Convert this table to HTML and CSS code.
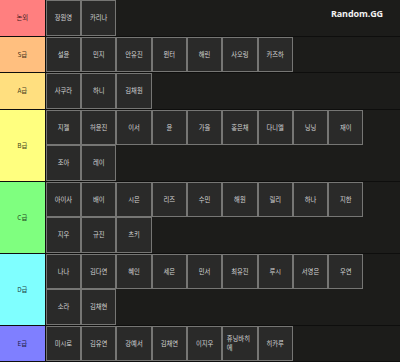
FILE: index.html
```html
<!DOCTYPE html>
<html lang="ko">
<head>
<meta charset="utf-8">
<title>Tier list</title>
<link rel="stylesheet" href="styles.css">
</head>
<body>
<div class="tierlist">
  <div class="row">
    <div class="label t0">논외</div>
    <div class="items">
      <div class="item"><span>장원영</span></div>
      <div class="item"><span>카리나</span></div>
    </div>
  </div>
  <div class="row">
    <div class="label ts">S급</div>
    <div class="items">
      <div class="item"><span>설윤</span></div>
      <div class="item"><span>민지</span></div>
      <div class="item"><span>안유진</span></div>
      <div class="item"><span>윈터</span></div>
      <div class="item"><span>해린</span></div>
      <div class="item"><span>사오링</span></div>
      <div class="item"><span>카즈하</span></div>
    </div>
  </div>
  <div class="row">
    <div class="label ta">A급</div>
    <div class="items">
      <div class="item"><span>사쿠라</span></div>
      <div class="item"><span>하니</span></div>
      <div class="item"><span>김채원</span></div>
    </div>
  </div>
  <div class="row">
    <div class="label tb">B급</div>
    <div class="items">
      <div class="item"><span>지젤</span></div>
      <div class="item"><span>허윤진</span></div>
      <div class="item"><span>이서</span></div>
      <div class="item"><span>윤</span></div>
      <div class="item"><span>가을</span></div>
      <div class="item"><span>홍은채</span></div>
      <div class="item"><span>다니엘</span></div>
      <div class="item"><span>닝닝</span></div>
      <div class="item"><span>재이</span></div>
      <div class="item"><span>조아</span></div>
      <div class="item"><span>레이</span></div>
    </div>
  </div>
  <div class="row">
    <div class="label tc">C급</div>
    <div class="items">
      <div class="item"><span>아이사</span></div>
      <div class="item"><span>배이</span></div>
      <div class="item"><span>시은</span></div>
      <div class="item"><span>리즈</span></div>
      <div class="item"><span>수민</span></div>
      <div class="item"><span>해원</span></div>
      <div class="item"><span>릴리</span></div>
      <div class="item"><span>하나</span></div>
      <div class="item"><span>지한</span></div>
      <div class="item"><span>지우</span></div>
      <div class="item"><span>규진</span></div>
      <div class="item"><span>츠키</span></div>
    </div>
  </div>
  <div class="row">
    <div class="label td">D급</div>
    <div class="items">
      <div class="item"><span>나나</span></div>
      <div class="item"><span>김다연</span></div>
      <div class="item"><span>혜인</span></div>
      <div class="item"><span>세은</span></div>
      <div class="item"><span>민서</span></div>
      <div class="item"><span>최유진</span></div>
      <div class="item"><span>루시</span></div>
      <div class="item"><span>서영은</span></div>
      <div class="item"><span>우연</span></div>
      <div class="item"><span>소라</span></div>
      <div class="item"><span>김채현</span></div>
    </div>
  </div>
  <div class="row">
    <div class="label te">E급</div>
    <div class="items">
      <div class="item"><span>미시로</span></div>
      <div class="item"><span>김유연</span></div>
      <div class="item"><span>강예서</span></div>
      <div class="item"><span>김채연</span></div>
      <div class="item"><span>이지우</span></div>
      <div class="item"><span>휴닝바히에</span></div>
      <div class="item"><span>히카루</span></div>
    </div>
  </div>
  <div class="brand">Random.GG</div>
</div>
</body>
</html>
```

FILE: styles.css
```css
html, body {
  margin: 0;
  padding: 0;
  background: #0e0e0d;
  overflow: hidden;
}

.tierlist {
  position: relative;
  width: 400px;
  font-family: "Noto Sans CJK KR", "Noto Sans", sans-serif;
}

.row {
  display: flex;
  margin-bottom: 1px;
  background: #0e0e0d;
}

.label {
  flex: none;
  width: 44.6px;
  margin-right: 1.2px;
  display: flex;
  align-items: center;
  justify-content: center;
  font-size: 6.4px;
  color: rgba(0, 0, 0, 0.8);
}

.t0 { background: #ff7f7f; }
.ts { background: #ffbf7f; }
.ta { background: #ffdf7f; }
.tb { background: #ffff7f; }
.tc { background: #7fff7f; }
.td { background: #7fffff; }
.te { background: #7f7fff; }

.items {
  flex: 1;
  display: flex;
  flex-wrap: wrap;
  align-content: flex-start;
  padding-right: 20px;
  min-height: 35.5px;
  background: #1c1c1a;
}

.item {
  box-sizing: border-box;
  width: 35.3px;
  height: 35.5px;
  padding: 0 3.5px;
  border: 1px solid #767674;
  background: #2a2a29;
  display: flex;
  align-items: center;
  justify-content: center;
  color: #d4d4d4;
  font-size: 6.3px;
  line-height: 9px;
}

.brand {
  position: absolute;
  top: 7px;
  right: 17px;
  font-family: "Open Sans", sans-serif;
  font-weight: 700;
  font-size: 9px;
  color: #f2f2f2;
  letter-spacing: -0.1px;
}
```
